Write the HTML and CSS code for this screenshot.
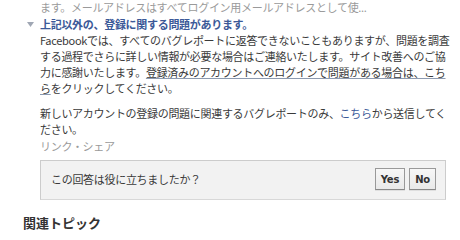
FILE: index.html
```html
<!DOCTYPE html>
<html lang="ja">
<head>
<meta charset="utf-8">
<link rel="stylesheet" href="styles.css">
</head>
<body>
<div class="page">
  <div class="faq">
    <p class="prev">ます。メールアドレスはすべてログイン用メールアドレスとして使...</p>
    <div class="q">
      <span class="tri"><svg width="7" height="5" viewBox="0 0 7 5"><path d="M0 0H7L3.5 5Z" fill="#a0a7b4"/></svg></span>
      <span class="qtext">上記以外の、登録に関する問題があります。</span>
    </div>
    <p class="ans">Facebookでは、すべてのバグレポートに返答できないこともありますが、問題を調査<br>する過程でさらに詳しい情報が必要な場合はご連絡いたします。サイト改善へのご協<br>力に感謝いたします。<span class="ul">登録済みのアカウントへのログインで問題がある場合は、こち<span class="ext"></span><br>ら</span>をクリックしてください。</p>
    <p class="ans">新しいアカウントの登録の問題に関連するバグレポートのみ、<a class="lnk" href="#">こちら</a>から送信してく<br>ださい。</p>
    <p class="share">リンク・シェア</p>
    <div class="helpful">
      <span class="htext">この回答は役に立ちましたか？</span>
      <div class="btns">
        <button class="btn">Yes</button>
        <button class="btn">No</button>
      </div>
    </div>
  </div>
  <h2 class="related">関連トピック</h2>
</div>
</body>
</html>
```
FILE: styles.css
```css
html, body {
  margin: 0;
  padding: 0;
  background: #ffffff;
}
body {
  font-family: "Noto Sans CJK JP", "Noto Sans", sans-serif;
  font-size: 11px;
  letter-spacing: -0.3px;
  color: #3a3a3a;
  line-height: 16px;
}
.page {
  padding-left: 23px;
}
.faq {
  padding-left: 17px;
  width: 406px;
}
.prev {
  margin: -1px 0 0 0;
  color: #9a9a9a;
}
.q {
  display: flex;
  align-items: center;
  margin: 1px 0 0 -13px;
}
.tri {
  width: 13px;
  display: flex;
  align-items: center;
}
.qtext {
  color: #3b5998;
  font-weight: bold;
}
.ans {
  margin: 0 0 9px 0;
  white-space: nowrap;
}
.ul {
  text-decoration: underline;
  text-decoration-color: #8c9ab0;
}
.ext {
  display: inline-block;
  width: 17px;
  height: 1px;
}
.lnk {
  color: #3b5998;
  text-decoration: none;
}
.share {
  margin: -8px 0 0 0;
  color: #9a9a9a;
}
.helpful {
  margin-top: 6px;
  height: 38px;
  box-sizing: content-box;
  background: #f2f2f2;
  border: 1px solid #cccccc;
  border-bottom-color: #d8d8d8;
  display: flex;
  align-items: flex-start;
  justify-content: space-between;
  padding: 0 9px 0 10px;
}
.htext {
  margin-top: 10px;
}
.btns {
  display: flex;
  gap: 4px;
  margin-top: 7px;
}
.btn {
  font-family: "DejaVu Sans", sans-serif;
  font-size: 10px;
  font-weight: bold;
  letter-spacing: -0.2px;
  color: #333333;
  background: linear-gradient(#f7f7f7, #e9e9e9);
  border: 1px solid #999999;
  border-bottom-color: #888888;
  height: 22px;
  padding: 0 5px;
  box-shadow: 0 1px 0 rgba(0,0,0,0.08);
}
.related {
  margin: 14px 0 0 0;
  font-size: 13px;
  font-weight: bold;
  letter-spacing: 0;
  color: #333333;
  line-height: 18px;
}
```
